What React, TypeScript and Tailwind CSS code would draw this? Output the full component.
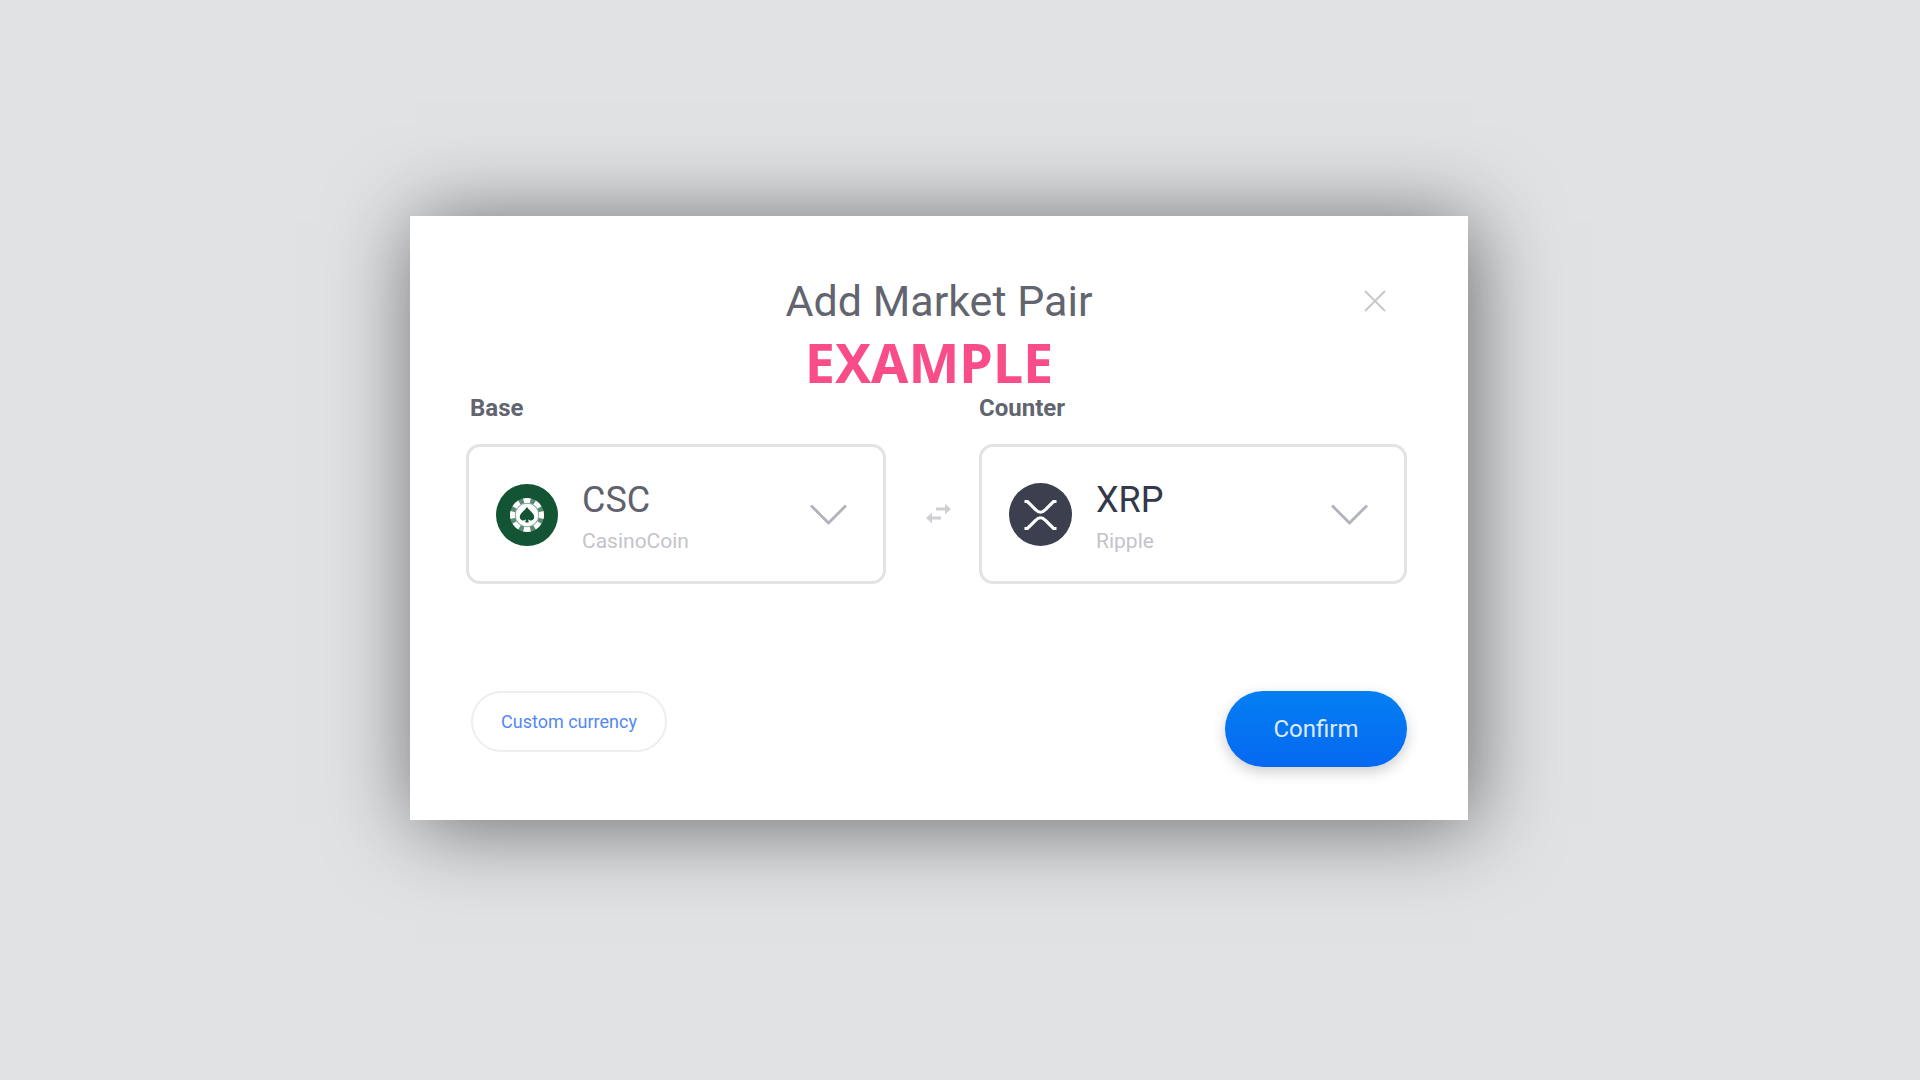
import { useState, type ReactNode } from "react";

type Currency = { code: string; name: string };

const CURRENCIES: Currency[] = [
  { code: "CSC", name: "CasinoCoin" },
  { code: "XRP", name: "Ripple" },
];

const ICONS: Record<string, ReactNode> = {
  CSC: <CasinoCoinIcon />,
  XRP: <RippleIcon />,
};

export default function App() {
  const [base, setBase] = useState("CSC");
  const [counter, setCounter] = useState("XRP");

  function swap() {
    setBase(counter);
    setCounter(base);
  }

  return (
    <main className="flex min-h-screen items-center justify-center bg-[#e1e2e4] pb-[45px] pr-[42px] font-[Roboto,sans-serif]">
      <section
        role="dialog"
        aria-labelledby="dialog-title"
        className="w-full max-w-[1058px] bg-white pb-[53px] pt-[59px] shadow-[5px_5px_80px_rgba(0,0,0,0.54)]"
      >
        <header className="grid grid-cols-[1fr_auto_1fr] items-center">
          <h1 id="dialog-title" className="col-start-2 text-[43px] leading-[52px] text-[#62656f]">
            Add Market Pair
          </h1>
          <button type="button" aria-label="Close" className="mr-[82px] justify-self-end">
            <svg width="22" height="22" viewBox="0 0 22 22" stroke="#c6c7ca" strokeWidth="1.8" fill="none">
              <path d="M1 1l20 20M21 1L1 21" />
            </svg>
          </button>
        </header>

        <p className="mt-[3px] pr-5 text-center font-['Noto_Sans',sans-serif] text-[54px] font-bold leading-[64px] text-[#f94d8a]">
          EXAMPLE
        </p>

        <div className="grid grid-cols-[420fr_93px_428fr] pl-[56px] pr-[61px]">
          <label htmlFor="base" className="pl-1 text-[24px] font-bold leading-[28px] text-[#62646f]">
            Base
          </label>
          <label htmlFor="counter" className="col-start-3 text-[24px] font-bold leading-[28px] text-[#62646f]">
            Counter
          </label>

          <CurrencySelect id="base" value={base} onChange={setBase} textColor="text-[#5f616d]" />
          <button
            type="button"
            aria-label="Swap currencies"
            onClick={swap}
            className="ml-3 mt-[22px] self-center justify-self-center"
          >
            <SwapIcon />
          </button>
          <CurrencySelect id="counter" value={counter} onChange={setCounter} textColor="text-[#33384a]" />
        </div>

        <footer className="mt-[107px] flex items-start justify-between px-[61px]">
          <button
            type="button"
            className="h-[61px] w-[196px] rounded-full border-2 border-[#eeeeee] text-[18px] text-[#5288f5]"
          >
            Custom currency
          </button>
          <button
            type="button"
            className="h-[76px] w-[182px] rounded-full bg-linear-to-b from-[#057ff2] to-[#0768f2] text-[24px] text-[#dfeaff] shadow-[0_5px_14px_rgba(0,0,0,0.2)]"
          >
            Confirm
          </button>
        </footer>
      </section>
    </main>
  );
}

function CurrencySelect({
  id,
  value,
  onChange,
  textColor,
}: {
  id: string;
  value: string;
  onChange: (code: string) => void;
  textColor: string;
}) {
  const selected = CURRENCIES.find((c) => c.code === value);

  return (
    <div className="mt-[22px] flex items-center rounded-[14px] border-3 border-[#e3e3e4] pb-7 pl-[27px] pr-9 pt-[30px]">
      {ICONS[value]}
      <div className="ml-6 min-w-0 flex-1 pt-0.5">
        <select
          id={id}
          value={value}
          onChange={(e) => onChange(e.target.value)}
          className={`block h-[42px] w-full appearance-none bg-transparent text-[36px] leading-[42px] outline-none ${textColor}`}
        >
          {CURRENCIES.map((c) => (
            <option key={c.code} value={c.code}>
              {c.code}
            </option>
          ))}
        </select>
        <div className="mt-2 text-[21px] leading-[24px] text-[#c3c4c9]">{selected?.name}</div>
      </div>
      <svg
        className="pointer-events-none flex-none"
        width="37"
        height="21"
        viewBox="0 0 37 21"
        fill="none"
        stroke="#b1b3bc"
        strokeWidth="2.8"
      >
        <path d="M1 1.5L18.5 19L36 1.5" />
      </svg>
    </div>
  );
}

// Poker chip: dashed outer ring, thin inner ring and a spade in the middle.
function CasinoCoinIcon() {
  return (
    <svg className="flex-none" width="62" height="62" viewBox="0 0 62 62">
      <circle cx="31" cy="31" r="31" fill="#135434" />
      <circle cx="31" cy="31" r="14.5" fill="none" stroke="#5c8b73" strokeWidth="5" />
      <circle
        cx="31"
        cy="31"
        r="14.5"
        fill="none"
        stroke="#ffffff"
        strokeWidth="5"
        pathLength="80"
        strokeDasharray="6 4"
        strokeDashoffset="3"
      />
      <circle cx="31" cy="31" r="11.8" fill="#ffffff" stroke="#8fb09f" strokeWidth="1" />
      <path
        d="M31 23c1.5 3 7.2 6 7.2 10 0 3.6-4.2 4.4-6.2 2.2l.8 3.3h-3.6l.8-3.3c-2 2.2-6.2 1.4-6.2-2.2 0-4 5.7-7 7.2-10z"
        fill="#135434"
      />
    </svg>
  );
}

function RippleIcon() {
  return (
    <svg className="flex-none" width="63" height="63" viewBox="0 0 63 63">
      <circle cx="31.5" cy="31.5" r="31.5" fill="#3c3f4e" />
      <g fill="none" stroke="#ffffff" strokeWidth="3.2">
        <path d="M15.5 18.5h3L26.5 26.5Q31.5 32 36.5 26.5L44.5 18.5h3" />
        <path d="M15.5 45.5h3L26.5 37.5Q31.5 32 36.5 37.5L44.5 45.5h3" />
      </g>
    </svg>
  );
}

function SwapIcon() {
  return (
    <svg width="25" height="21" viewBox="0 0 25 21" fill="#cfd0d3">
      <path d="M10 4.5h9V0.5l6 5.5-6 5.5V7.5h-9z" />
      <path d="M15 13.5H6V9.5L0 15l6 5.5V16.5h9z" />
    </svg>
  );
}
